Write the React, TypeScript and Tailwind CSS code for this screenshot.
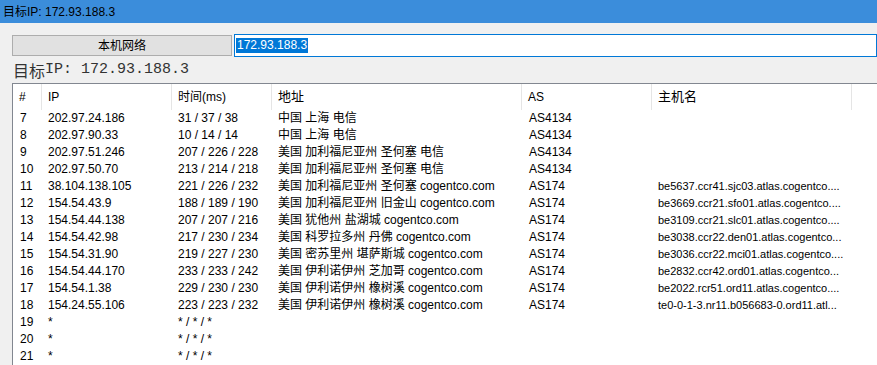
const rows: [string, string, string, string, string, string][] = [
  ['7', '202.97.24.186', '31 / 37 / 38', '中国 上海 电信', 'AS4134', ''],
  ['8', '202.97.90.33', '10 / 14 / 14', '中国 上海 电信', 'AS4134', ''],
  ['9', '202.97.51.246', '207 / 226 / 228', '美国 加利福尼亚州 圣何塞 电信', 'AS4134', ''],
  ['10', '202.97.50.70', '213 / 214 / 218', '美国 加利福尼亚州 圣何塞 电信', 'AS4134', ''],
  ['11', '38.104.138.105', '221 / 226 / 232', '美国 加利福尼亚州 圣何塞 cogentco.com', 'AS174', 'be5637.ccr41.sjc03.atlas.cogentco....'],
  ['12', '154.54.43.9', '188 / 189 / 190', '美国 加利福尼亚州 旧金山 cogentco.com', 'AS174', 'be3669.ccr21.sfo01.atlas.cogentco....'],
  ['13', '154.54.44.138', '207 / 207 / 216', '美国 犹他州 盐湖城 cogentco.com', 'AS174', 'be3109.ccr21.slc01.atlas.cogentco....'],
  ['14', '154.54.42.98', '217 / 230 / 234', '美国 科罗拉多州 丹佛 cogentco.com', 'AS174', 'be3038.ccr22.den01.atlas.cogentco...'],
  ['15', '154.54.31.90', '219 / 227 / 230', '美国 密苏里州 堪萨斯城 cogentco.com', 'AS174', 'be3036.ccr22.mci01.atlas.cogentco....'],
  ['16', '154.54.44.170', '233 / 233 / 242', '美国 伊利诺伊州 芝加哥 cogentco.com', 'AS174', 'be2832.ccr42.ord01.atlas.cogentco...'],
  ['17', '154.54.1.38', '229 / 230 / 230', '美国 伊利诺伊州 橡树溪 cogentco.com', 'AS174', 'be2022.rcr51.ord11.atlas.cogentco....'],
  ['18', '154.24.55.106', '223 / 223 / 232', '美国 伊利诺伊州 橡树溪 cogentco.com', 'AS174', 'te0-0-1-3.nr11.b056683-0.ord11.atl...'],
  ['19', '*', '* / * / *', '', '', ''],
  ['20', '*', '* / * / *', '', '', ''],
  ['21', '*', '* / * / *', '', '', ''],
];

const headers = ['#', 'IP', '时间(ms)', '地址', 'AS', '主机名', ''];

const ui = { fontFamily: '"Liberation Sans", "Noto Sans CJK SC", sans-serif' };

export default function App() {
  return (
    <div className="w-[877px] h-[365px] overflow-hidden bg-[#f0f0f0] text-[12px] text-black flex flex-col" style={ui}>
      {/* title bar */}
      <div className="h-[23px] shrink-0 bg-[#3b8ddb] flex items-center pl-[3px] text-[12px]">
        目标IP: 172.93.188.3
      </div>

      {/* button + input row */}
      <div className="flex items-start pt-[11px] pl-[12px] shrink-0">
        <div className="mt-[1px] w-[220px] h-[21px] bg-[#e1e1e1] border border-[#adadad] flex items-center justify-center text-[12px]">
          本机网络
        </div>
        <div className="ml-[2px] flex-1 h-[23px] bg-white border border-[#0078d7] flex items-center pl-[1px]">
          <span className="bg-[#0078d7] text-white px-[1px] leading-[15px]">172.93.188.3</span>
        </div>
      </div>

      {/* big label */}
      <div className="h-[26px] shrink-0 pl-[13px] flex items-center text-[#333]">
        <span className="text-[16px]" style={{ fontFamily: '"Noto Sans CJK SC", sans-serif' }}>目标</span>
        <span className="text-[15px]" style={{ fontFamily: '"Liberation Mono", monospace' }}>IP: 172.93.188.3</span>
      </div>

      {/* list view */}
      <div className="flex-1 ml-[12px] bg-white border-l border-t border-[#828790]">
        <div className="grid grid-cols-[29px_130px_100px_250px_130px_200px_1fr] h-[26px]">
          {headers.map((h, i) => (
            <div
              key={i}
              className={`flex items-center px-[6px] ${i < 6 ? 'border-r border-[#e5e5e5]' : ''} ${i === 5 || i === 3 ? 'text-[13px]' : ''}`}
            >
              {h}
            </div>
          ))}
        </div>
        {rows.map((r) => (
          <div key={r[0]} className="grid grid-cols-[29px_130px_100px_250px_130px_200px_1fr] h-[17px] items-center leading-[17px]">
            <div className="px-[7px]">{r[0]}</div>
            <div className="px-[6px] whitespace-nowrap">{r[1]}</div>
            <div className="px-[6px] whitespace-nowrap">{r[2]}</div>
            <div className="px-[6px] whitespace-nowrap">{r[3]}</div>
            <div className="px-[7px]">{r[4]}</div>
            <div className="px-[6px] whitespace-nowrap text-[11px]">{r[5]}</div>
            <div />
          </div>
        ))}
      </div>
    </div>
  );
}
